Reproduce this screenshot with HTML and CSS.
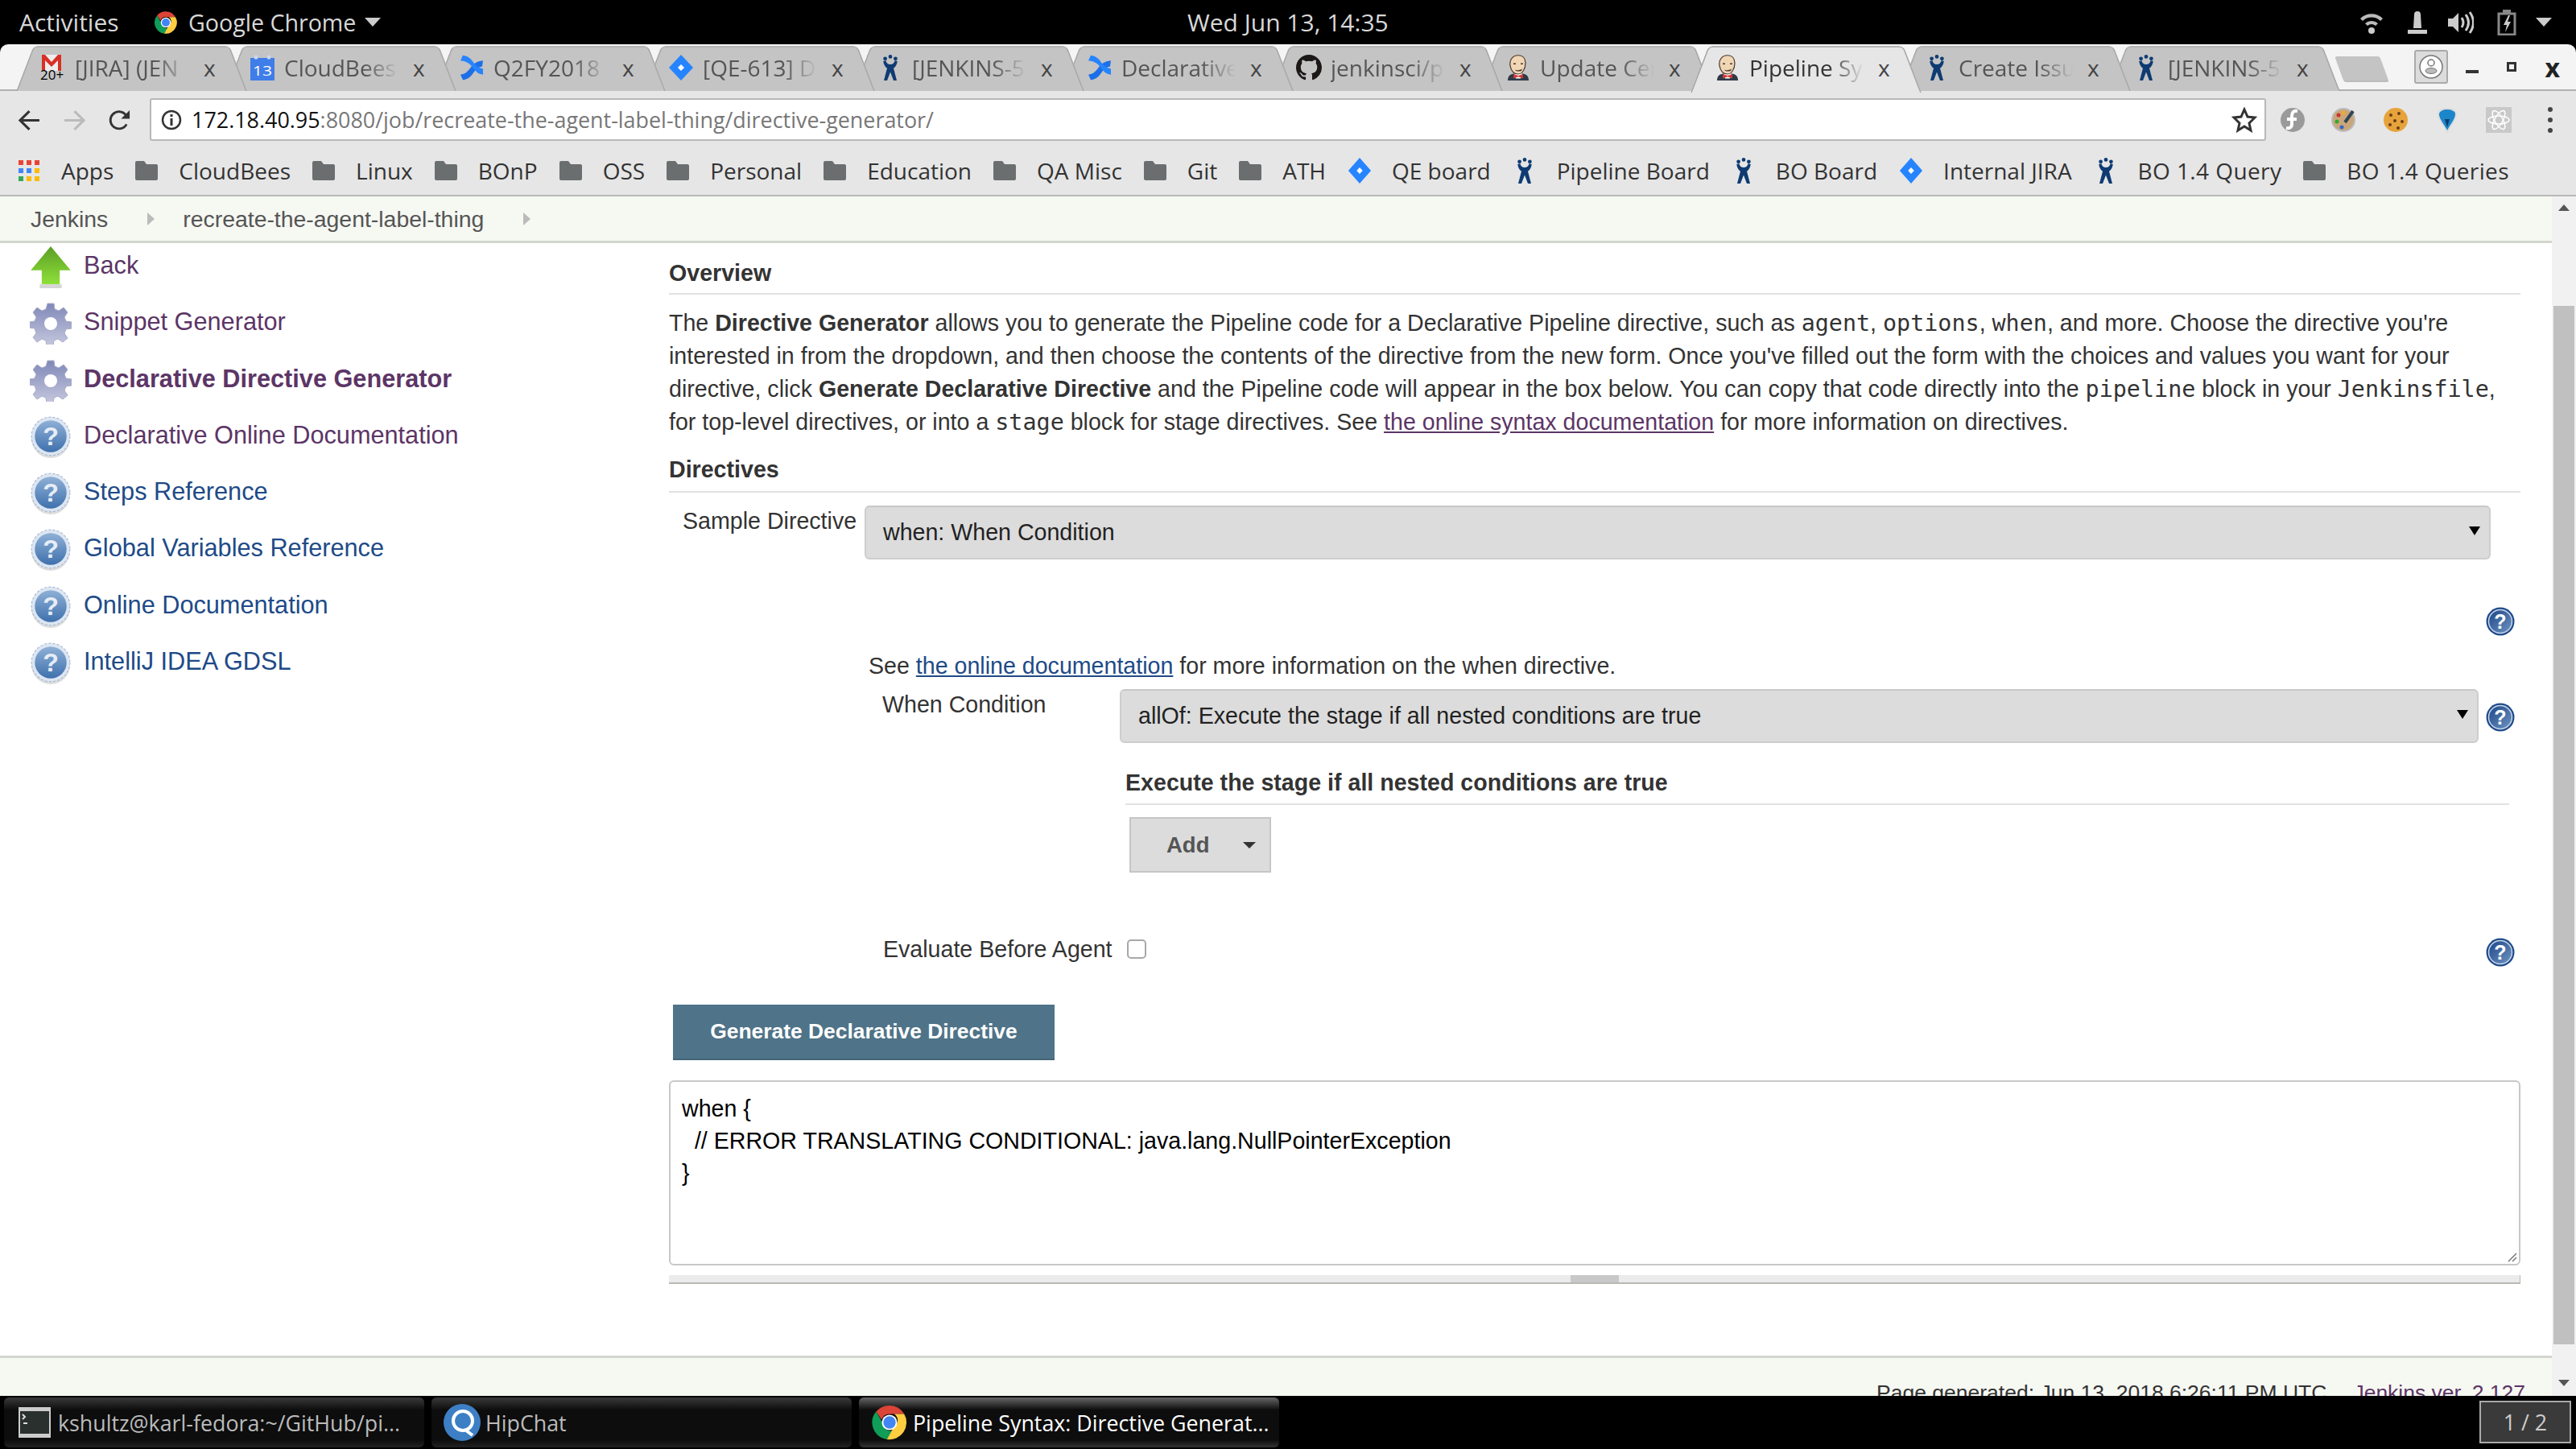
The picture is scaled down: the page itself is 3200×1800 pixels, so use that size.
FILE: index.html
```html
<!DOCTYPE html>
<html lang="en">
<head>
    <meta charset="UTF-8">
    <title>Pipeline Syntax: Directive Generator</title>
    <link rel="stylesheet" href="styles.css">
</head>
<body>
    <svg class="defs" xmlns="http://www.w3.org/2000/svg">
        <defs>
            <linearGradient id="helpBig" x1="0" y1="0" x2="0" y2="1"><stop offset="0" stop-color="#8fb0d6"/><stop offset="1" stop-color="#3f71ad"/></linearGradient>
            <linearGradient id="helpSmall" x1="0" y1="0" x2="1" y2="1"><stop offset="0" stop-color="#1d4585"/><stop offset="1" stop-color="#6f95c4"/></linearGradient>
            <linearGradient id="gearFill" x1="0" y1="0" x2="0" y2="1"><stop offset="0" stop-color="#7f88b8"/><stop offset="1" stop-color="#c6c8de"/></linearGradient>
            <linearGradient id="arrowFill" x1="0" y1="0" x2="0" y2="1"><stop offset="0" stop-color="#5c9e25"/><stop offset="1" stop-color="#8fe03a"/></linearGradient>
        </defs>
        <symbol id="chrome" viewBox="0 0 24 24">
            <path fill="#db4437" d="M12 1a11 11 0 0 1 9.500 5.500H12a5.500 5.500 0 0 0-5.200 3.700L3.300 5A11 11 0 0 1 12 1z"/>
            <path fill="#0f9d58" d="M3.300 5l4.700 8.200a5 5 0 0 0 5.600 4.300L10.300 22.900A11 11 0 0 1 3.300 5z"/>
            <path fill="#ffcd40" d="M21.500 6.500A11 11 0 0 1 10.300 22.900l4.500-7.900a5 5 0 0 0 .2-8.500z"/>
            <circle cx="12" cy="12" r="5" fill="#fff"/>
            <circle cx="12" cy="12" r="4" fill="#4285f4"/>
        </symbol>
        <symbol id="gmail" viewBox="0 0 32 32">
            <path fill="#eee" d="M2 0h24v20H2z"/>
            <path fill="#d93025" d="M2 0h4l8 9 8-9h4v20h-4V7l-8 8-8-8v13H2z"/>
            <text x="0" y="31" font-family="Open Sans" font-size="17" fill="#000">20+</text>
        </symbol>
        <symbol id="calendar" viewBox="0 0 32 40" preserveAspectRatio="none">
            <path fill="#3f7de8" d="M1 5h30v35H1z"/>
            <path fill="#c9d8f5" d="M6 1h4v6H6zM22 1h4v6h-4z"/>
            <text x="16" y="33" text-anchor="middle" font-family="Open Sans" font-size="21" fill="#fff">13</text>
        </symbol>
        <symbol id="confluence" viewBox="0 0 32 40" preserveAspectRatio="none">
            <path fill="#1c6fe8" d="M2 31c6-1 9-5 12-10 4-7 8-11 16-12l-1 9c-5 1-8 5-11 10-3 6-7 10-13 11z"/>
            <path fill="#2684ff" d="M30 31c-6-1-9-5-12-10C14 14 10 10 2 9l3-8c6 1 10 5 13 11 3 5 6 8 12 10z"/>
        </symbol>
        <symbol id="jira" viewBox="0 0 32 40" preserveAspectRatio="none">
            <path fill="#2684ff" d="M16 0l15 20-15 20L1 20z"/>
            <path fill="#fff" d="M16 15l4 5-4 5-4-5z"/>
        </symbol>
        <symbol id="atl" viewBox="0 0 28 40">
            <path fill="#0f3b73" d="M14 0a3 3 0 1 1 0 6 3 3 0 0 1 0-6zM6 3a3 3 0 1 1 0 6 3 3 0 0 1 0-6zM22 3a3 3 0 1 1 0 6 3 3 0 0 1 0-6z"/>
            <path fill="#0f3b73" d="M3 10l4-1c1 4 3 6 7 6s6-2 7-6l4 1c-1 6-3 9-6 11l5 19h-5l-5-13-5 13H4l5-19c-3-2-5-5-6-11z"/>
        </symbol>
        <symbol id="github" viewBox="0 0 16 16">
            <path fill="#1b1817" d="M8 0C3.580 0 0 3.580 0 8c0 3.540 2.290 6.530 5.470 7.590.4.07.55-.17.55-.38 0-.19-.01-.82-.01-1.490-2.010.37-2.530-.49-2.690-.94-.09-.23-.48-.94-.82-1.130-.28-.15-.68-.52-.01-.53.63-.01 1.080.58 1.230.82.72 1.210 1.870.87 2.330.66.07-.52.28-.87.51-1.070-1.780-.2-3.640-.89-3.640-3.950 0-.87.31-1.590.82-2.150-.08-.2-.36-1.020.08-2.120 0 0 .67-.21 2.200.82.64-.18 1.320-.27 2-.27.68 0 1.360.09 2 .27 1.530-1.040 2.200-.82 2.200-.82.44 1.100.16 1.920.08 2.120.51.56.82 1.270.82 2.150 0 3.070-1.870 3.750-3.650 3.950.29.25.54.73.54 1.480 0 1.070-.01 1.930-.01 2.200 0 .21.15.46.55.38A8.013 8.013 0 0 0 16 8c0-4.420-3.580-8-8-8z"/>
        </symbol>
        <symbol id="butler" viewBox="0 0 32 40" preserveAspectRatio="none">
            <path fill="#2d3a48" d="M3 40c0-7 3-10 8-11h10c5 1 8 4 8 11z"/>
            <path fill="#fff" d="M11 29h10l-2 8h-6z"/>
            <path fill="#d33833" d="M10 30l6 2.500 6-2.500v7l-6-3-6 3z"/>
            <path fill="#f0d6b5" stroke="#49362c" stroke-width="1.200" d="M16 1c6 0 9 5 9 12 0 9-4 17-9 17-6 0-9-6-10-13C5 8 9 1 16 1z"/>
            <path fill="#49362c" d="M10 13h3v2h-3zM19 13h3v2h-3zM12 23c3 2 6 1 9-1l-1 3c-2 1-5 1-7 0z"/>
        </symbol>
        <symbol id="folder" viewBox="0 0 28 24" preserveAspectRatio="none">
            <path fill="#6b6e6f" d="M2 0h9l3 4h12a2 2 0 0 1 2 2v16a2 2 0 0 1-2 2H2a2 2 0 0 1-2-2V2a2 2 0 0 1 2-2z"/>
        </symbol>
        <symbol id="apps" viewBox="0 0 26 26">
            <path fill="#ea4335" d="M0 0h6v6H0zM10 0h6v6h-6zM20 0h6v6h-6z"/>
            <path fill="#4285f4" d="M0 10h6v6H0zM10 10h6v6h-6z"/>
            <path fill="#fbbc05" d="M20 10h6v6h-6zM10 20h6v6h-6zM20 20h6v6h-6z"/>
            <path fill="#34a853" d="M0 20h6v6H0z"/>
        </symbol>
        <symbol id="gear" viewBox="0 0 52 52">
            <path fill="url(#gearFill)" stroke="#a9acc6" stroke-width="1" d="M22 1h8l1 7 5 2 6-4 5 6-4 6 2 5 7 1v8l-7 1-2 5 4 6-6 5-6-4-5 2-1 7h-8l-1-7-5-2-6 4-5-6 4-5-2-6-7-1v-7l7-1 2-5-4-6 5-6 6 4 5-2z"/>
            <circle cx="26" cy="26" r="8" fill="#fff"/>
        </symbol>
        <symbol id="help" viewBox="0 0 48 50">
            <ellipse cx="24" cy="27" rx="23" ry="23" fill="#bbb" opacity=".5"/>
            <circle cx="24" cy="24" r="23" fill="#dde6f2" stroke="#9fb6d3" stroke-width="1" stroke-dasharray="3 2"/>
            <circle cx="24" cy="24" r="19" fill="url(#helpBig)"/>
            <text x="24" y="35" text-anchor="middle" font-family="Liberation Sans" font-weight="700" font-size="31" fill="#e6edf6">?</text>
        </symbol>
        <symbol id="helpmini" viewBox="0 0 36 36">
            <circle cx="18" cy="18" r="17.500" fill="#1f4a8a"/>
            <circle cx="18" cy="18" r="14.500" fill="url(#helpSmall)" stroke="#c8d6ea" stroke-width="1.500"/>
            <text x="18" y="27" text-anchor="middle" font-family="Liberation Sans" font-weight="700" font-size="25" fill="#fff">?</text>
        </symbol>
    </svg>

    <div class="topbar">
        <span class="activities">Activities</span>
        <svg class="top-chrome"><use href="#chrome"/></svg>
        <span class="appname">Google Chrome</span>
        <span class="top-caret"></span>
        <span class="clock">Wed Jun 13, 14:35</span>
        <div class="tray">
            <svg class="tray-wifi" viewBox="0 0 28 28"><path fill="#bbb" d="M0 9a20 20 0 0 1 28 0l-3 3a16 16 0 0 0-22 0zM6 15a12 12 0 0 1 16 0l-3 3a8 8 0 0 0-10 0z"/><circle cx="14" cy="24" r="4" fill="#ccc"/></svg>
            <svg class="tray-bell" viewBox="0 0 24 28"><path fill="#ccc" d="M12 0a4 4 0 0 1 4 4l1 17H7L8 4a4 4 0 0 1 4-4zM0 23h24v5H0z"/></svg>
            <svg class="tray-vol" viewBox="0 0 32 28"><path fill="#ccc" d="M0 9h6l7-7v24l-7-7H0z"/><path fill="none" stroke="#ccc" stroke-width="3" d="M17 8q4 6 0 12M22 4q7 10 0 20M27 1q9 13 0 26"/></svg>
            <svg class="tray-batt" viewBox="0 0 24 32"><path fill="none" stroke="#888" stroke-width="3" d="M2 5h20v26H2z"/><path fill="#888" d="M7 0h10v4H7z"/><path fill="#ccc" d="M14 7l-6 12h4l-2 9 7-13h-4l3-8z"/></svg>
            <span class="top-caret tray-caret"></span>
        </div>
    </div>

    <div class="tabstrip">
        <div class="tab"><svg class="fav"><use href="#gmail"/></svg><span class="tab-title">[JIRA] (JEN</span><span class="tab-x">x</span></div>
        <div class="tab"><svg class="fav"><use href="#calendar"/></svg><span class="tab-title">CloudBees</span><span class="tab-x">x</span></div>
        <div class="tab"><svg class="fav"><use href="#confluence"/></svg><span class="tab-title">Q2FY2018</span><span class="tab-x">x</span></div>
        <div class="tab"><svg class="fav"><use href="#jira"/></svg><span class="tab-title">[QE-613] D</span><span class="tab-x">x</span></div>
        <div class="tab"><svg class="fav"><use href="#atl"/></svg><span class="tab-title">[JENKINS-5</span><span class="tab-x">x</span></div>
        <div class="tab"><svg class="fav"><use href="#confluence"/></svg><span class="tab-title">Declarative</span><span class="tab-x">x</span></div>
        <div class="tab"><svg class="fav"><use href="#github"/></svg><span class="tab-title">jenkinsci/p</span><span class="tab-x">x</span></div>
        <div class="tab"><svg class="fav"><use href="#butler"/></svg><span class="tab-title">Update Cen</span><span class="tab-x">x</span></div>
        <div class="tab active"><svg class="fav"><use href="#butler"/></svg><span class="tab-title">Pipeline Sy</span><span class="tab-x">x</span></div>
        <div class="tab"><svg class="fav"><use href="#atl"/></svg><span class="tab-title">Create Issu</span><span class="tab-x">x</span></div>
        <div class="tab"><svg class="fav"><use href="#atl"/></svg><span class="tab-title">[JENKINS-5</span><span class="tab-x">x</span></div>
        <div class="newtab"></div>
        <div class="wincontrols">
            <div class="profile"><svg viewBox="0 0 30 30"><circle cx="15" cy="15" r="14" fill="#fff" stroke="#777" stroke-width="1.500"/><circle cx="15" cy="10" r="4" fill="none" stroke="#777" stroke-width="1.500"/><ellipse cx="15" cy="20" rx="7" ry="3.500" fill="#bbb" stroke="#777"/></svg></div>
            <span class="win-min"></span>
            <span class="win-max"></span>
            <span class="win-close">x</span>
        </div>
    </div>

    <div class="toolbar">
        <svg class="nav-btn" viewBox="0 0 26 26"><path fill="none" stroke="#333" stroke-width="3" d="M25 13H3M13 2L2 13l11 11"/></svg>
        <svg class="nav-btn" viewBox="0 0 26 26"><path fill="none" stroke="#bbb" stroke-width="3" d="M1 13h22M13 2l11 11-11 11"/></svg>
        <svg class="nav-btn" viewBox="0 0 28 28"><path fill="none" stroke="#333" stroke-width="3" d="M23 19a11 11 0 1 1-1-12"/><path fill="#333" d="M27 1v11H16z"/></svg>
        <div class="omnibox">
            <svg class="info" viewBox="0 0 26 26"><circle cx="13" cy="13" r="11" fill="none" stroke="#333" stroke-width="2.500"/><path fill="#333" d="M11.500 6h3v3h-3zM11.500 11h3v9h-3z"/></svg>
            <span class="url"><span class="url-host">172.18.40.95</span>:8080/job/recreate-the-agent-label-thing/directive-generator/</span>
            <svg class="star" viewBox="0 0 32 32"><path fill="none" stroke="#333" stroke-width="3" d="M16 3l4 9 9 1-7 7 2 9-8-5-8 5 2-9-7-7 9-1z"/></svg>
        </div>
        <div class="extensions">
            <svg viewBox="0 0 32 32"><circle cx="16" cy="16" r="15" fill="#9a9a9a"/><path fill="none" stroke="#fff" stroke-width="4" d="M22 5c-5-1-7 2-7 6v10c0 4-3 6-7 5M9 15h12"/></svg>
            <svg viewBox="0 0 32 32"><circle cx="15" cy="16" r="14" fill="#c9a67a" stroke="#bbb" stroke-width="2"/><circle cx="9" cy="10" r="2.500" fill="#c33"/><circle cx="7" cy="18" r="2.500" fill="#3a3"/><circle cx="13" cy="25" r="2.500" fill="#36c"/><circle cx="15" cy="7" r="2.500" fill="#ea3"/><path stroke="#345" stroke-width="4" d="M27 5L17 19"/></svg>
            <svg viewBox="0 0 32 32"><circle cx="16" cy="16" r="15" fill="#e7a33b"/><circle cx="10" cy="10" r="2" fill="#6b3d16"/><circle cx="20" cy="8" r="2" fill="#6b3d16"/><circle cx="15" cy="17" r="2" fill="#6b3d16"/><circle cx="24" cy="18" r="2" fill="#6b3d16"/><circle cx="9" cy="22" r="2" fill="#6b3d16"/><circle cx="19" cy="26" r="2" fill="#6b3d16"/></svg>
            <svg viewBox="0 0 32 32"><path fill="#1b86c9" stroke="#ddd" stroke-width="2" d="M16 31C12 22 4 15 5 8c1-8 21-8 22 0 1 7-7 14-11 23z"/><path fill="#0f3b73" d="M16 25l-3-10h6z"/></svg>
            <svg viewBox="0 0 32 32"><path fill="#c9c9c9" d="M0 0h32v32H0z"/><g fill="none" stroke="#fff" stroke-width="1.500"><ellipse cx="16" cy="16" rx="13" ry="5"/><ellipse cx="16" cy="16" rx="13" ry="5" transform="rotate(60 16 16)"/><ellipse cx="16" cy="16" rx="13" ry="5" transform="rotate(120 16 16)"/></g></svg>
            <div class="dots"><i></i><i></i><i></i></div>
        </div>
    </div>

    <div class="bookmarks">
        <div class="bm"><svg class="bm-apps"><use href="#apps"/></svg>Apps</div>
        <div class="bm"><svg class="bm-ico"><use href="#folder"/></svg>CloudBees</div>
        <div class="bm"><svg class="bm-ico"><use href="#folder"/></svg>Linux</div>
        <div class="bm"><svg class="bm-ico"><use href="#folder"/></svg>BOnP</div>
        <div class="bm"><svg class="bm-ico"><use href="#folder"/></svg>OSS</div>
        <div class="bm"><svg class="bm-ico"><use href="#folder"/></svg>Personal</div>
        <div class="bm"><svg class="bm-ico"><use href="#folder"/></svg>Education</div>
        <div class="bm"><svg class="bm-ico"><use href="#folder"/></svg>QA Misc</div>
        <div class="bm"><svg class="bm-ico"><use href="#folder"/></svg>Git</div>
        <div class="bm"><svg class="bm-ico"><use href="#folder"/></svg>ATH</div>
        <div class="bm"><svg class="bm-tall"><use href="#jira"/></svg>QE board</div>
        <div class="bm"><svg class="bm-tall"><use href="#atl"/></svg>Pipeline Board</div>
        <div class="bm"><svg class="bm-tall"><use href="#atl"/></svg>BO Board</div>
        <div class="bm"><svg class="bm-tall"><use href="#jira"/></svg>Internal JIRA</div>
        <div class="bm"><svg class="bm-tall"><use href="#atl"/></svg><span class="bm-wide">BO 1.4 Query</span></div>
        <div class="bm"><svg class="bm-ico"><use href="#folder"/></svg><span class="bm-wide">BO 1.4 Queries</span></div>
    </div>

    <div class="page">
        <div class="viewport">
            <div class="breadcrumbs">
                <span>Jenkins</span><span class="crumb-arrow"></span>
                <span>recreate-the-agent-label-thing</span><span class="crumb-arrow"></span>
            </div>

            <div class="content">
                <div class="side">
                    <a class="task visited"><svg class="task-ico" viewBox="0 0 42 42"><path fill="url(#arrowFill)" d="M21 0l20 24H30v14H12V24H1z"/><path fill="#999" opacity=".4" d="M10 38h22v4H10z"/></svg>Back</a>
                    <a class="task visited"><svg class="task-ico"><use href="#gear"/></svg>Snippet Generator</a>
                    <a class="task visited current"><svg class="task-ico"><use href="#gear"/></svg>Declarative Directive Generator</a>
                    <a class="task visited"><svg class="task-ico"><use href="#help"/></svg>Declarative Online Documentation</a>
                    <a class="task"><svg class="task-ico"><use href="#help"/></svg>Steps Reference</a>
                    <a class="task"><svg class="task-ico"><use href="#help"/></svg>Global Variables Reference</a>
                    <a class="task"><svg class="task-ico"><use href="#help"/></svg>Online Documentation</a>
                    <a class="task"><svg class="task-ico"><use href="#help"/></svg>IntelliJ IDEA GDSL</a>
                </div>

                <div class="main">
                    <div class="section-title">Overview</div>
                    <p class="overview">The <b>Directive Generator</b> allows you to generate the Pipeline code for a Declarative Pipeline directive, such as <code>agent</code>, <code>options</code>, <code>when</code>, and more. Choose the directive you're interested in from the dropdown, and then choose the contents of the directive from the new form. Once you've filled out the form with the choices and values you want for your directive, click <b>Generate Declarative Directive</b> and the Pipeline code will appear in the box below. You can copy that code directly into the <code>pipeline</code> block in your <code>Jenkinsfile</code>, for top-level directives, or into a <code>stage</code> block for stage directives. See <a class="visited-link">the online syntax documentation</a> for more information on directives.</p>

                    <div class="section-title directives">Directives</div>
                    <div class="sample-row">
                        <span class="sample-label">Sample Directive</span>
                        <div class="select select-sample"><span>when: When Condition</span><i class="select-arrow"></i></div>
                    </div>
                    <div class="help-row help-first"><svg class="help-mini"><use href="#helpmini"/></svg></div>

                    <div class="see">See <a class="doc-link">the online documentation</a> for more information on the when directive.</div>

                    <div class="when-row">
                        <span class="when-label">When Condition</span>
                        <div class="select select-when"><span>allOf: Execute the stage if all nested conditions are true</span><i class="select-arrow"></i></div>
                        <svg class="help-mini"><use href="#helpmini"/></svg>
                    </div>

                    <div class="nested">
                        <div class="nested-title">Execute the stage if all nested conditions are true</div>
                        <div class="add-btn">Add<i class="add-arrow"></i></div>
                    </div>

                    <div class="eval-row">
                        <span class="eval-label">Evaluate Before Agent</span>
                        <span class="checkbox"></span>
                        <svg class="help-mini"><use href="#helpmini"/></svg>
                    </div>

                    <div class="generate">Generate Declarative Directive</div>

                    <div class="output">
                        <div>when {</div>
                        <div>&nbsp;&nbsp;// ERROR TRANSLATING CONDITIONAL: java.lang.NullPointerException</div>
                        <div>}</div>
                        <svg class="grip" viewBox="0 0 12 12"><path stroke="#777" stroke-width="1.500" d="M11 1L1 11M11 6l-5 5"/></svg>
                    </div>
                    <div class="resize-bar"><span class="resize-handle"></span></div>
                </div>
            </div>

            <div class="footer">
                <span>Page generated: Jun 13, 2018 6:26:11 PM UTC</span>
                <a class="visited-plain">Jenkins ver. 2.127</a>
            </div>
        </div>
        <div class="scrollbar">
            <i class="scroll-up"></i>
            <div class="scroll-track"><div class="scroll-thumb"></div></div>
            <i class="scroll-down"></i>
        </div>
    </div>

    <div class="taskbar">
        <div class="task-btn">
            <svg class="tb-ico" viewBox="0 0 46 46"><path fill="#ccc" d="M3 4h40v38H3z"/><path fill="#2a302e" d="M5 9h36v28H5z"/><path fill="none" stroke="#ddd" stroke-width="2" d="M8 13l3 3-3 3"/><path fill="#ddd" d="M9 23h5v2H9z"/></svg>
            <span>kshultz@karl-fedora:~/GitHub/pi...</span>
        </div>
        <div class="task-btn">
            <svg class="tb-ico" viewBox="0 0 46 46"><circle cx="23" cy="23" r="23" fill="#3d7fc4"/><circle cx="24" cy="21" r="12" fill="none" stroke="#fff" stroke-width="4"/><path stroke="#fff" stroke-width="4" d="M28 33l8 6"/></svg>
            <span>HipChat</span>
        </div>
        <div class="task-btn focused">
            <svg class="tb-ico"><use href="#chrome"/></svg>
            <span>Pipeline Syntax: Directive Generat...</span>
        </div>
        <div class="workspace">1 / 2</div>
    </div>
</body>
</html>
```

FILE: styles.css
```css
* {
    margin: 0;
    padding: 0;
    box-sizing: border-box;
}

html, body {
    height: 100%;
}

body {
    width: 3200px;
    height: 1800px;
    overflow: hidden;
    display: flex;
    flex-direction: column;
    font-family: 'Liberation Sans', Arial, sans-serif;
    font-size: 28.6px;
    color: #333;
    background: #000;
}

.defs {
    width: 0;
    height: 0;
    flex: none;
}

/* gnome top bar */
.topbar {
    flex: none;
    height: 55px;
    background: #000;
    color: #d8d8d8;
    display: flex;
    align-items: center;
    position: relative;
    font-family: 'Open Sans', sans-serif;
    font-size: 28.6px;
}

.activities {
    margin-left: 24px;
    width: 167px;
    font-size: 30px;
}

.top-chrome {
    width: 30px;
    height: 30px;
}

.appname {
    margin-left: 13px;
}

.top-caret {
    margin-left: 11px;
    border-left: 10px solid transparent;
    border-right: 10px solid transparent;
    border-top: 11px solid #ccc;
}

.clock {
    position: absolute;
    left: 1475px;
    font-size: 30px;
}

.tray {
    margin-left: auto;
    margin-right: 30px;
    display: flex;
    align-items: center;
}

.tray-wifi { width: 28px; height: 28px; }
.tray-bell { width: 24px; height: 28px; margin-left: 31px; }
.tray-vol { width: 32px; height: 28px; margin-left: 26px; }
.tray-batt { width: 24px; height: 32px; margin-left: 29px; }
.tray-caret { margin-left: 24px; }

/* chrome tabs */
.tabstrip {
    flex: none;
    height: 58px;
    background: #f4f4f4;
    border-radius: 10px 10px 0 0;
    border-bottom: 2px solid #b0b0b0;
    display: flex;
    padding-left: 20px;
    font-family: 'Open Sans', sans-serif;
    font-size: 28px;
    color: #555;
}

.tab {
    flex: none;
    width: 260px;
    height: 58px;
    position: relative;
    display: flex;
    align-items: center;
    padding-left: 30px;
}

.tab::before,
.tab::after {
    content: "";
    position: absolute;
    top: 2px;
    bottom: 0;
    width: 150px;
    background: #c4c4c4;
    border-top: 2px solid #b4b4b4;
    z-index: -1;
}

.tab::before {
    left: 0;
    border-left: 2px solid #aaa;
    border-radius: 6px 0 0 0;
    transform-origin: bottom left;
    transform: skewX(-21deg);
}

.tab::after {
    left: 135px;
    border-right: 2px solid #aaa;
    border-radius: 0 6px 0 0;
    transform-origin: bottom right;
    transform: skewX(21deg);
}

.tab:nth-child(1) { z-index: 11; }
.tab:nth-child(2) { z-index: 10; }
.tab:nth-child(3) { z-index: 9; }
.tab:nth-child(4) { z-index: 8; }
.tab:nth-child(5) { z-index: 7; }
.tab:nth-child(6) { z-index: 6; }
.tab:nth-child(7) { z-index: 5; }
.tab:nth-child(8) { z-index: 4; }
.tab:nth-child(10) { z-index: 3; }
.tab:nth-child(11) { z-index: 2; }

.tab.active { z-index: 12; color: #333; }

.tab.active::before,
.tab.active::after {
    background: #e6e6e6;
    bottom: -2px;
}

.fav {
    flex: none;
    width: 32px;
    height: 32px;
}

.tab-title {
    margin-left: 11px;
    width: 142px;
    overflow: hidden;
    white-space: nowrap;
    -webkit-mask-image: linear-gradient(to right, #000 70%, transparent 100%);
    mask-image: linear-gradient(to right, #000 70%, transparent 100%);
}

.tab-x {
    margin-left: 18px;
    color: #444;
    line-height: 1;
}

.newtab {
    width: 56px;
    height: 32px;
    margin: 15px 0 0 26px;
    background: #c4c4c4;
    border-bottom: 2px solid #bbb;
    transform: skewX(20deg);
    border-radius: 3px;
}

.wincontrols {
    margin-left: auto;
    display: flex;
    align-items: center;
    height: 56px;
}

.profile {
    width: 42px;
    height: 42px;
    background: #dcdcdc;
    border: 2px solid #aaa;
    border-radius: 3px;
    display: flex;
    justify-content: center;
    align-items: center;
}

.profile svg {
    width: 30px;
    height: 30px;
}

.win-min {
    width: 16px;
    height: 4px;
    background: #333;
    margin: 12px 0 0 22px;
}

.win-max {
    width: 12px;
    height: 12px;
    border: 3px solid #333;
    margin-left: 35px;
}

.win-close {
    margin: 0 20px 0 36px;
    font-weight: 700;
    color: #222;
    font-size: 32px;
}

/* chrome toolbar */
.toolbar {
    flex: none;
    height: 62px;
    background: #e6e6e6;
    display: flex;
    align-items: flex-end;
}

.nav-btn {
    flex: none;
    width: 27px;
    height: 27px;
    margin: 0 0 12px 23px;
}

.nav-btn:nth-child(2) { margin-left: 29px; }
.nav-btn:nth-child(3) { margin-left: 29px; }

.omnibox {
    flex: none;
    margin-left: 24px;
    width: 2629px;
    height: 53px;
    background: #fff;
    border: 2px solid #b8b8b8;
    border-radius: 3px;
    display: flex;
    align-items: center;
    padding-left: 12px;
    font-family: 'Open Sans', sans-serif;
    font-size: 26.9px;
    color: #777;
}

.info {
    width: 26px;
    height: 26px;
}

.url {
    margin-left: 12px;
}

.url-host {
    color: #111;
}

.star {
    width: 32px;
    height: 32px;
    margin-left: auto;
    margin-right: 9px;
}

.extensions {
    flex: none;
    display: flex;
    align-items: center;
    height: 53px;
    margin-left: -15px;
}

.extensions svg {
    width: 32px;
    height: 32px;
    margin-left: 32px;
}

.dots {
    display: flex;
    flex-direction: column;
    gap: 7px;
    margin-left: 45px;
}

.dots i {
    width: 6px;
    height: 6px;
    border-radius: 50%;
    background: #444;
}

/* bookmarks */
.bookmarks {
    flex: none;
    height: 69px;
    background: #e6e6e6;
    border-bottom: 2px solid #b8b8b8;
    display: flex;
    align-items: center;
    padding: 7px 0 0 23px;
    gap: 27px;
    font-family: 'Open Sans', sans-serif;
    font-size: 28px;
    color: #333;
}

.bm {
    flex: none;
    display: flex;
    align-items: center;
    white-space: nowrap;
}

.bm-wide {
    letter-spacing: .4px;
}

.bm-apps {
    width: 26px;
    height: 26px;
    margin-right: 27px;
}

.bm-ico {
    width: 28px;
    height: 24px;
    margin-right: 26px;
}

.bm-tall {
    width: 30px;
    height: 32px;
    margin-right: 25px;
}

/* jenkins page */
.page {
    flex: 1;
    min-height: 0;
    display: flex;
    background: #fff;
}

.viewport {
    flex: 1;
    min-width: 0;
    overflow: hidden;
    display: flex;
    flex-direction: column;
}

.breadcrumbs {
    flex: none;
    height: 58px;
    background: #f6f8f2;
    border-bottom: 3px solid #d3d7cf;
    display: flex;
    align-items: center;
    padding: 1px 0 0 38px;
    font-size: 28.4px;
    color: #555;
}

.crumb-arrow {
    margin: 0 35px 0 49px;
    border-left: 9px solid #bbb;
    border-top: 8px solid transparent;
    border-bottom: 8px solid transparent;
}

.content {
    flex: none;
    height: 1382px;
    display: flex;
}

.side {
    flex: none;
    width: 831px;
    padding-left: 37px;
    display: flex;
    flex-direction: column;
    gap: 16.3px;
}

.task {
    height: 54px;
    padding-top: 2px;
    display: flex;
    align-items: center;
    color: #204a87;
    font-size: 30.7px;
    white-space: nowrap;
}

.task.visited { color: #5c3566; }
.task.current { font-weight: 700; }

.task-ico {
    flex: none;
    width: 52px;
    height: 52px;
    margin-right: 15px;
    margin-top: 4px;
}

.main {
    width: 2300px;
    padding-top: 17px;
}

.section-title {
    font-weight: 700;
    line-height: 40px;
    padding-bottom: 5px;
    border-bottom: 2px solid #e2e2e2;
}

.overview {
    margin-top: 15px;
    line-height: 40.3px;
}

code {
    font-family: 'DejaVu Sans Mono', monospace;
    font-size: 28.4px;
}

.visited-link {
    color: #5c3566;
    text-decoration: underline;
}

.directives {
    margin-top: 18px;
    padding-bottom: 7px;
}

.sample-row {
    margin-top: 16px;
    display: flex;
}

.sample-label {
    margin-left: 17px;
    width: 226px;
    line-height: 38px;
    white-space: nowrap;
}

.select {
    height: 67px;
    background: #dcdcdc;
    border: 2px solid #cecece;
    border-top-color: #c8c8c8;
    border-radius: 6px;
    display: flex;
    align-items: center;
    justify-content: space-between;
    padding: 0 11px 0 21px;
    color: #222;
    white-space: nowrap;
}

.select-sample {
    width: 2020px;
}

.select-when {
    width: 1688px;
}

.select-arrow {
    border-left: 7px solid transparent;
    border-right: 7px solid transparent;
    border-top: 11px solid #000;
    margin-top: -4px;
}

.help-row {
    margin-top: 59px;
    display: flex;
    justify-content: flex-end;
    padding-right: 7px;
}

.help-mini {
    flex: none;
    width: 36px;
    height: 36px;
    display: block;
}

.see {
    margin: 17px 0 0 248px;
    line-height: 40px;
}

.doc-link {
    color: #204a87;
    text-decoration: underline;
}

.when-row {
    margin-top: 9px;
    display: flex;
    align-items: flex-start;
    padding-left: 265px;
}

.when-label {
    width: 295px;
    line-height: 38px;
}

.when-row .help-mini {
    margin: 17px 0 0 9px;
}

.nested {
    margin: 29px 0 0 567px;
    width: 1719px;
}

.nested-title {
    font-weight: 700;
    line-height: 40px;
    padding-bottom: 6px;
    border-bottom: 2px solid #e2e2e2;
}

.add-btn {
    margin: 15px 0 0 5px;
    width: 176px;
    height: 69px;
    background: #dcdcdc;
    border: 2px solid #c6c6c6;
    display: flex;
    align-items: center;
    padding-left: 44px;
    font-size: 27.5px;
    font-weight: 700;
    color: #555;
}

.add-arrow {
    margin-left: 42px;
    border-left: 8px solid transparent;
    border-right: 8px solid transparent;
    border-top: 8px solid #333;
}

.eval-row {
    margin-top: 77px;
    display: flex;
    align-items: center;
    padding-left: 266px;
    height: 36px;
}

.eval-label {
    width: 303px;
    white-space: nowrap;
}

.checkbox {
    width: 24px;
    height: 24px;
    background: #fff;
    border: 2px solid #a8a8a8;
    border-radius: 5px;
}

.eval-row .help-mini {
    margin-left: auto;
    margin-right: 7px;
    margin-top: 8px;
}

.generate {
    margin: 51px 0 0 5px;
    width: 474px;
    height: 69px;
    background: #4f7388;
    border-bottom: 2px solid #446578;
    color: #fff;
    font-size: 26.4px;
    font-weight: 700;
    display: flex;
    align-items: center;
    justify-content: center;
}

.output {
    position: relative;
    margin-top: 25px;
    height: 230px;
    border: 2px solid #c8c8c8;
    border-radius: 6px;
    padding: 13px 14px;
    line-height: 40px;
    color: #000;
}

.grip {
    position: absolute;
    right: 2px;
    bottom: 2px;
    width: 12px;
    height: 12px;
}

.resize-bar {
    margin-top: 12px;
    height: 11px;
    background: #ebebeb;
    border-bottom: 2px solid #bbb9b4;
    border-right: 1px solid #bbb9b4;
    display: flex;
    justify-content: center;
}

.resize-handle {
    width: 60px;
    height: 9px;
    background: #c8c8c8;
}

.footer {
    flex: none;
    height: 120px;
    background: #f6f8f2;
    border-top: 3px solid #d3d7cf;
    display: flex;
    justify-content: flex-end;
    padding: 28px 33px 0 0;
    font-size: 26.5px;
    color: #333;
    white-space: nowrap;
}

.visited-plain {
    margin-left: 33px;
    color: #5c3566;
}

.scrollbar {
    flex: none;
    width: 30px;
    background: #f1f1f1;
    display: flex;
    flex-direction: column;
    align-items: center;
    padding-top: 10px;
}

.scroll-up {
    border-left: 7px solid transparent;
    border-right: 7px solid transparent;
    border-bottom: 8px solid #555;
}

.scroll-track {
    flex: 1;
    width: 100%;
    padding: 118px 2px 0 2px;
}

.scroll-thumb {
    height: 1290px;
    background: #c0c0c0;
}

.scroll-down {
    margin-bottom: 12px;
    border-left: 7px solid transparent;
    border-right: 7px solid transparent;
    border-top: 8px solid #555;
}

/* gnome window list */
.taskbar {
    flex: none;
    height: 66px;
    background: #000;
    display: flex;
    align-items: flex-start;
    padding: 2px 0 0 5px;
    gap: 9px;
    color: #bbb;
    font-family: 'Open Sans', sans-serif;
    font-size: 26.8px;
    position: relative;
}

.task-btn {
    flex: none;
    width: 522px;
    height: 62px;
    background: linear-gradient(#3a3a3a, #0d0d0d 25%, #0d0d0d 85%, #222);
    border-radius: 6px;
    display: flex;
    align-items: center;
    padding-left: 15px;
    white-space: nowrap;
}

.task-btn.focused {
    color: #fff;
    background: linear-gradient(#666, #0d0d0d 25%, #0d0d0d 85%, #333);
}

.tb-ico {
    flex: none;
    width: 46px;
    height: 46px;
    margin-right: 6px;
}

.workspace {
    margin: 4px 6px 0 auto;
    width: 114px;
    height: 53px;
    background: #3a3a3a;
    border: 2px solid #aaa;
    color: #ccc;
    display: flex;
    align-items: center;
    justify-content: center;
}
```
